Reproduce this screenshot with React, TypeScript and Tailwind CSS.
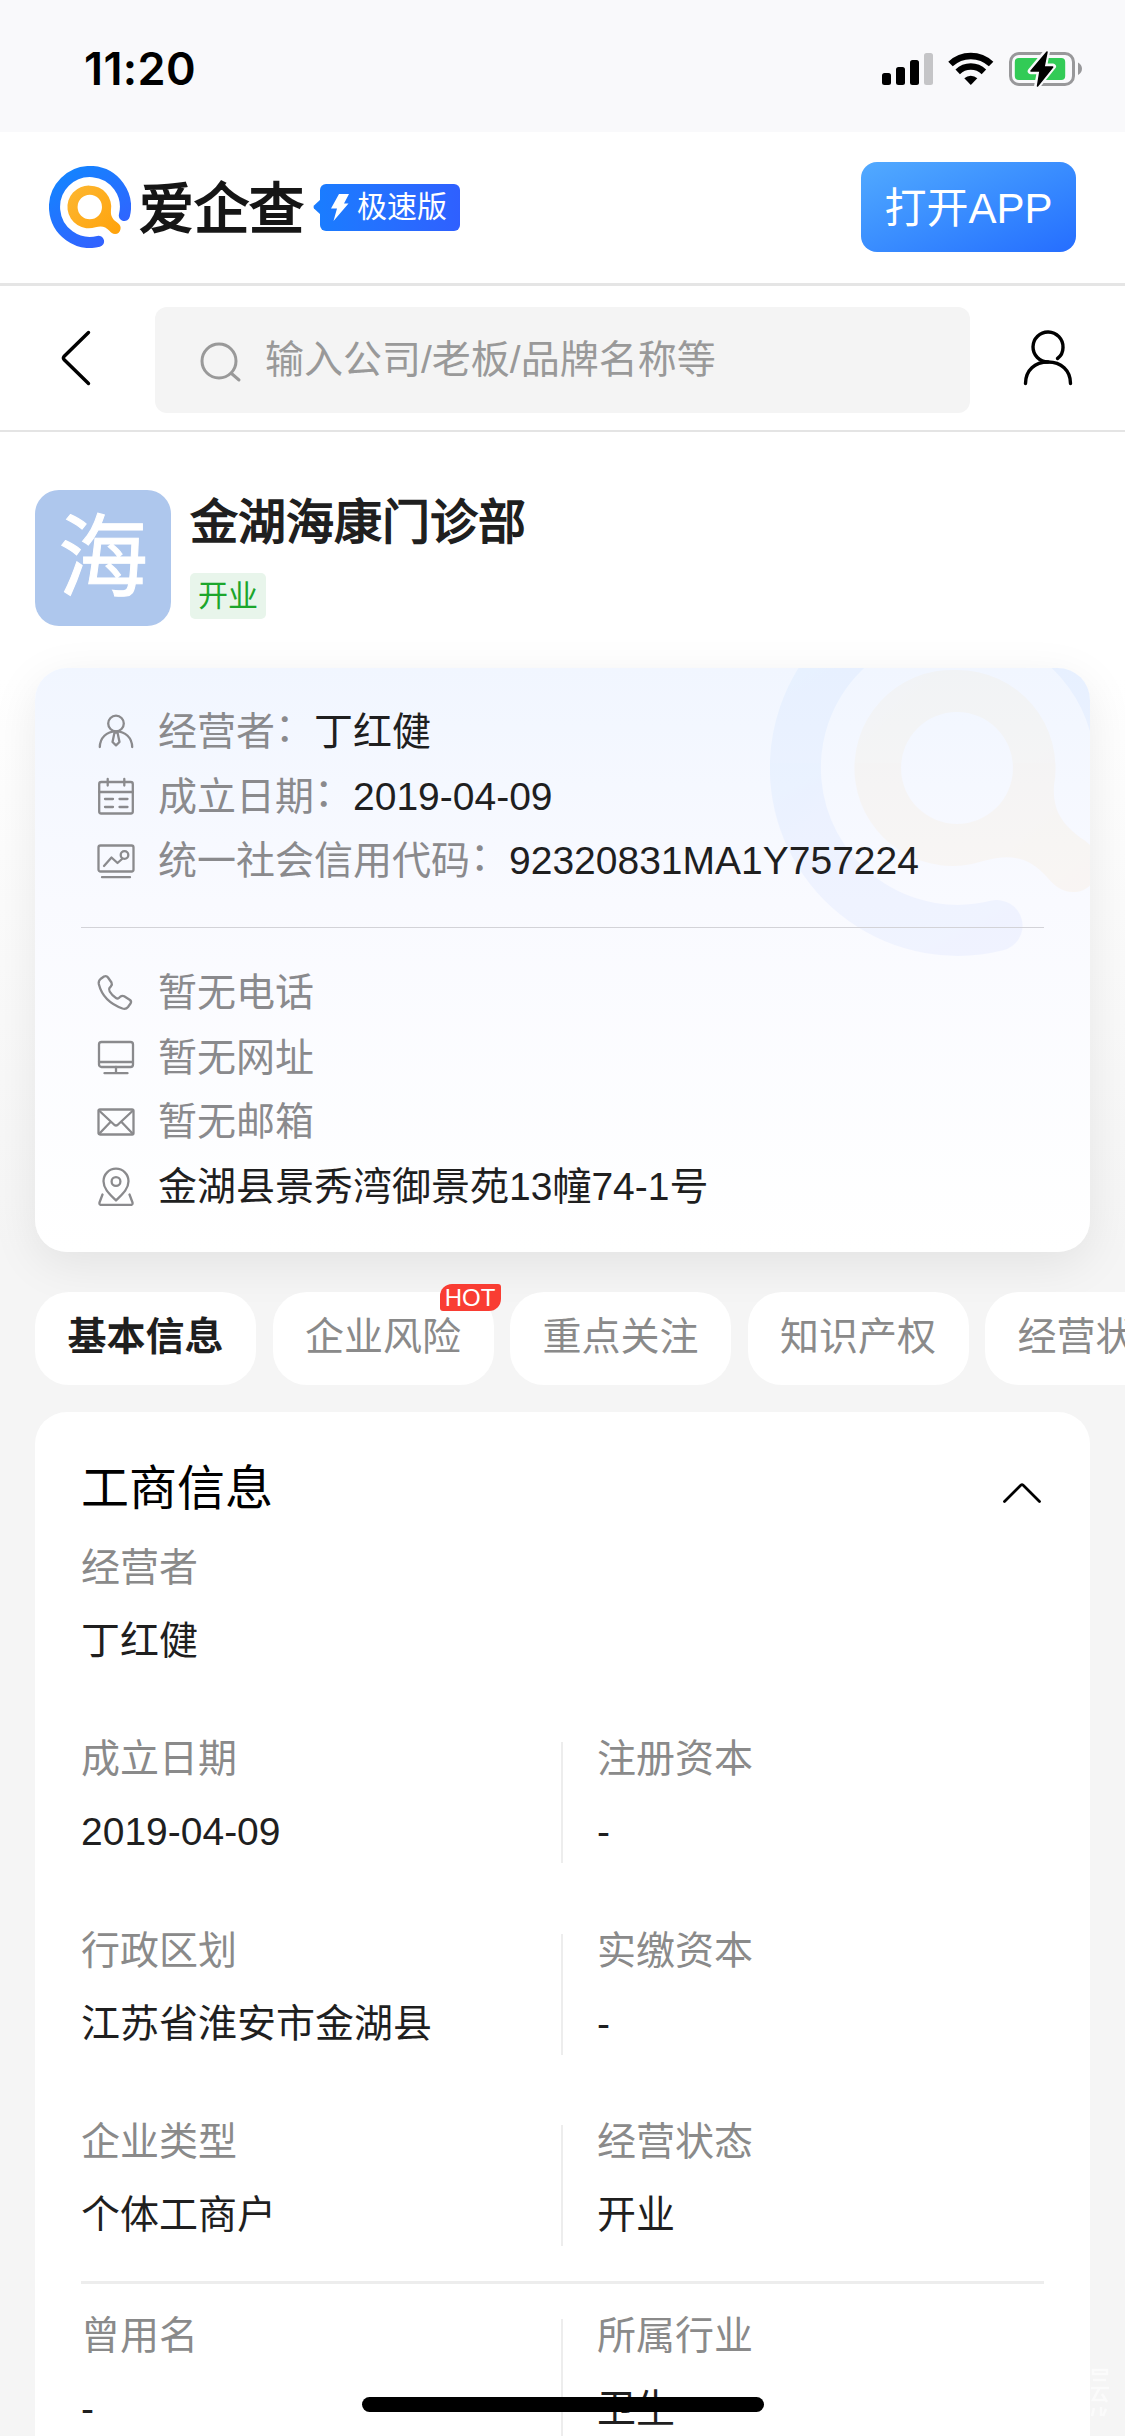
import React from "react";

interface Field {
  label: string;
  value: string;
}

const rows: Field[][] = [
  [
    { label: "成立日期", value: "2019-04-09" },
    { label: "注册资本", value: "-" },
  ],
  [
    { label: "行政区划", value: "江苏省淮安市金湖县" },
    { label: "实缴资本", value: "-" },
  ],
  [
    { label: "企业类型", value: "个体工商户" },
    { label: "经营状态", value: "开业" },
  ],
];

const lastRow: Field[] = [
  { label: "曾用名", value: "-" },
  { label: "所属行业", value: "卫生" },
];

const tabs = ["基本信息", "企业风险", "重点关注", "知识产权", "经营状"];

interface LogoProps {
  id: string;
  className?: string;
}

const LogoMark = (props: LogoProps) => {
  return (
    <svg viewBox="0 0 376 376" className={props.className} fill="none">
      <defs>
        <linearGradient id={props.id + "b"} gradientUnits="userSpaceOnUse" x1="60" y1="40" x2="260" y2="360">
          <stop offset="0" stopColor="#1483ff" />
          <stop offset="1" stopColor="#3361ff" />
        </linearGradient>
        <linearGradient id={props.id + "o"} gradientUnits="userSpaceOnUse" x1="100" y1="100" x2="320" y2="320">
          <stop offset="0" stopColor="#fdb62f" />
          <stop offset="1" stopColor="#ffa20a" />
        </linearGradient>
      </defs>
      <path
        d="M227 345.6A162.5 162.5 0 1 1 345.6 227"
        stroke={`url(#${props.id}b)`}
        strokeWidth="51"
        strokeLinecap="round"
      />
      {/* ring and handle in one shape, the inner circle is cut out */}
      <path
        fillRule="evenodd"
        d="M187 90A98 98 0 0 1 284 205C282 232 294 246 314 260C326 269 330 277 328 289C326 303 316 312 303 312C291 312 284 305 277 297C259 277 240 273 213 281A98 98 0 1 1 187 90ZM187 132A56 56 0 1 0 187 244A56 56 0 1 0 187 132Z"
        fill={`url(#${props.id}o)`}
      />
    </svg>
  );
};

const iconProps = {
  viewBox: "0 0 40 40",
  className: "h-10 w-10 shrink-0",
  fill: "none",
  stroke: "#8a8a8d",
  strokeWidth: 2.3,
  strokeLinecap: "round" as const,
  strokeLinejoin: "round" as const,
};

const PersonIcon = () => (
  <svg {...iconProps}>
    <circle cx="20" cy="12.500" r="7.800" />
    <path d="M3.800 36C4 27 10.500 20.300 20 20.300S36 27 36.200 36" />
    <path d="M18.500 21.500h3l2 9.500-3.500 3.300-3.500-3.300z" />
  </svg>
);

const CalendarIcon = () => (
  <svg {...iconProps}>
    <rect x="3.200" y="6" width="33.600" height="31.500" rx="2" />
    <path d="M3.200 16h33.600M11.700 3v6.500M28.300 3v6.500M9 23h8M23.500 23h8M9 31h8M23.500 31h8" />
  </svg>
);

const CodeIcon = () => (
  <svg {...iconProps}>
    <rect x="2.500" y="5.500" width="35" height="26" rx="2" />
    <path d="M6 37.200h28M8 26l7.500-8.500 6 5.500 4.500-4" />
    <circle cx="28.500" cy="15" r="3.800" />
  </svg>
);

const PhoneIcon = () => (
  <svg {...iconProps}>
    <path d="M4.500 7L8 4.500Q10.500 3.300 12 5.500L15.500 10.500Q16.500 12.500 14.800 14.500L13.500 16Q12.500 17.500 13.700 19.500Q16 23.500 20 26Q21.500 27 23 25.800L24.500 24.500Q26.300 23.300 28.200 24.300L34 28Q35.800 29.500 34.500 31.500L32 35Q30 37.500 26.500 36.500C14 32 5.500 23 2.800 12Q2.300 9 4.500 7Z" />
  </svg>
);

const MonitorIcon = () => (
  <svg {...iconProps}>
    <rect x="3" y="5" width="34" height="25" rx="2.500" />
    <path d="M3 25h34M20 30v6.200M8.500 36.200h23" />
  </svg>
);

const MailIcon = () => (
  <svg {...iconProps}>
    <rect x="2.500" y="8.500" width="35" height="25" rx="1.500" />
    <path d="M3 9.500L18.500 24Q20 25 21.500 24L37 9.500M3 33L14 21.500M37 33L26 21.500" />
  </svg>
);

const PinIcon = () => (
  <svg {...iconProps}>
    <path d="M20 34.500C14 28.500 7.500 23 7.500 15.200A12.500 12.500 0 0 1 32.500 15.200C32.500 23 26 28.500 20 34.500Z" />
    <circle cx="20" cy="15.500" r="4.400" />
    <path d="M6.500 28.500L3.500 36.500Q3 39 5.500 39H34.500Q37 39 36.500 36.500L33.500 28.500" />
  </svg>
);

interface InfoRowProps {
  icon: React.ReactNode;
  label?: string;
  value?: string;
}

const InfoRow = (props: InfoRowProps) => {
  return (
    <div className="flex h-[64.5px] items-center">
      {props.icon}
      <span className="mt-[2px] ml-[22px] text-[39px] leading-[60px] whitespace-nowrap text-[#8a8a8d]">
        {props.label}
        {props.label && props.value && <span className="relative -top-1">：</span>}
        <span className="text-[#1f1f1f]">{props.value}</span>
      </span>
    </div>
  );
};

const FieldRow = (props: { data: Field[] }) => {
  return (
    <div className="flex h-[121px]">
      {props.data.map((field, index) => {
        return (
          <div
            key={field.label}
            className={
              index === 0
                ? "w-[482px] shrink-0 border-r-2 border-[#ededed]"
                : "pl-[34px]"
            }
          >
            <div className="mt-px text-[39px] leading-[32px] text-[#8a8a8a]">{field.label}</div>
            <div className="mt-[37px] text-[39px] leading-[40px] text-[#1f1f1f]">{field.value}</div>
          </div>
        );
      })}
    </div>
  );
};

const StatusBar = () => {
  return (
    <div className="flex h-[132px] items-start justify-between bg-[#f9f9fb] pr-[42px] pl-[84px]">
      <span className="mt-[41px] font-[Inter] text-[45px] leading-[56px] font-semibold tracking-[0.4px] text-black">
        11:20
      </span>
      <svg className="mt-[48px] h-[42px] w-[204px]" viewBox="0 0 204 42">
        <rect x="3" y="25" width="9" height="12" rx="2.500" />
        <rect x="17" y="19" width="9" height="18" rx="2.500" />
        <rect x="31" y="12" width="9" height="25" rx="2.500" />
        <rect x="45" y="5" width="9" height="32" rx="2.500" fill="#c5c5c7" />
        <g fill="none" stroke="#000" strokeWidth="6.500">
          <path d="M71.500 16A29.500 29.500 0 0 1 112.100 16" />
          <path d="M78.700 23.800A19 19 0 0 1 104.900 23.800" />
        </g>
        <path d="M85.300 30.300A9.500 9.500 0 0 1 98.300 30.300L91.800 37Z" />
        <rect x="131.500" y="5.500" width="63" height="31" rx="8.500" fill="none" stroke="#98989a" strokeWidth="3" />
        <path d="M199 14.500Q203 17 203 20.700T199 27Z" fill="#98989a" />
        <rect x="135.800" y="10" width="50.400" height="22" rx="4" fill="#32cb56" />
        <path
          d="M168 3.500L151.700 23.200H161L158 38.500L174 18.500H165Z"
          stroke="#f9f9fb"
          strokeWidth="6"
          strokeLinejoin="round"
        />
        <path d="M168 4L152 23H161L158.500 38L173.700 19H165Z" stroke="#000" strokeWidth="1.500" strokeLinejoin="round" />
      </svg>
    </div>
  );
};

const Header = () => {
  return (
    <header className="flex h-[154px] items-center border-b-3 border-[#e5e5e5] bg-white pr-[49px] pb-px pl-[49px]">
      <LogoMark id="logo" className="h-[82px] w-[82px]" />
      <span className="mt-[3px] ml-[8px] text-[55px] leading-[60px] text-[#161616] [-webkit-text-stroke:2px_#161616]">
        爱企查
      </span>
      <svg className="ml-[9px] h-[16px] w-[8px]" viewBox="0 0 8 16">
        <path d="M8 0L1 6.500Q0 8 1 9.500L8 16Z" fill="#1a7cff" />
      </svg>
      <div className="-ml-px flex h-[47px] w-[140px] items-center rounded-[6px] bg-linear-to-r from-[#1a7cff] to-[#2f60ff] pl-[11px]">
        <svg className="h-[28px] w-[18px]" viewBox="0 0 18 28" fill="#fff">
          <path d="M8 1H18L13 10.500H17.500L2.500 28L6 15.500H0Z" />
        </svg>
        <span className="ml-[8px] text-[30px] leading-[40px] whitespace-nowrap text-white">极速版</span>
      </div>
      <button className="ml-auto h-[90px] w-[215px] rounded-[16px] bg-linear-to-br from-[#52aaff] to-[#266dff] text-[42px] leading-[93px] whitespace-nowrap text-white">
        打开APP
      </button>
    </header>
  );
};

const SearchBar = () => {
  return (
    <div className="flex h-[146px] items-center border-b-2 border-[#e4e4e4] bg-white pl-[60px]">
      <svg className="h-[56px] w-[32px]" viewBox="0 0 32 56" fill="none" stroke="#000" strokeWidth="3.400">
        <path d="M28.500 2.500L4 26.500Q2.800 28 4 29.500L28.500 53.500" strokeLinecap="round" />
      </svg>
      <div className="mt-[4px] ml-[63px] flex h-[106px] w-[815px] items-center rounded-[12px] bg-[#f4f4f4] pl-[45px]">
        <svg className="mt-[3px] h-[42px] w-[42px]" viewBox="0 0 42 42" fill="none" stroke="#999" strokeWidth="3">
          <circle cx="19" cy="20" r="17" />
          <path d="M31.500 32.500L39 39" strokeLinecap="round" />
        </svg>
        <span className="ml-[23px] text-[39px] leading-[60px] text-[#999]">
          输入公司/老板/品牌名称等
        </span>
      </div>
      <svg className="ml-[53px] h-[56px] w-[50px]" viewBox="0 0 50 56" fill="none" stroke="#000" strokeWidth="3.400" strokeLinecap="round">
        <path d="M34.500 28.500C38 26 40 21.500 40 17.500A15 15 0 1 0 25 32" />
        <path d="M2.500 53.500C2.500 40 12 32 25 32S47.500 40 47.500 53.500" />
      </svg>
    </div>
  );
};

const App = () => {
  return (
    <div className="relative h-[2436px] w-[1125px] overflow-hidden bg-[#f5f5f5] font-['Liberation_Sans','Noto_Sans_CJK_SC',sans-serif]">
      <StatusBar />
      <Header />
      <SearchBar />

      {/* company */}
      <div className="bg-linear-to-b from-white from-30% to-[#f5f5f5] to-100% px-[35px] pt-[58px]">
        <div className="flex h-[136px]">
          <div className="h-[136px] w-[136px] rounded-[24px] bg-[#aec7ed] text-center text-[90px] leading-[136px] text-white [-webkit-text-stroke:1px_white]">
            海
          </div>
          <div className="ml-[19px]">
            <h1 className="mt-[3px] text-[48px] leading-[60px] text-[#1f1f1f] [-webkit-text-stroke:1.6px_#1f1f1f]">
              金湖海康门诊部
            </h1>
            <span className="mt-[20px] block h-[46px] w-[76px] rounded-[5px] bg-[#e8f5eb] text-center text-[30px] leading-[45px] text-[#1ca62c]">
              开业
            </span>
          </div>
        </div>

        {/* info card */}
        <section className="relative mt-[42px] h-[584px] overflow-clip rounded-[32px] bg-linear-to-b from-[#f1f6ff] via-[#f9faff] via-40% to-white px-[46px] pt-[31px] shadow-[0_12px_48px_rgba(0,0,0,0.08)]">
          <LogoMark id="mark" className="absolute top-[-88px] left-[735px] h-[376px] w-[376px] opacity-[0.045]" />
          <div className="relative h-[229px] border-b border-[#d3d3d8] pl-[15px]">
            <InfoRow icon={<PersonIcon />} label="经营者" value="丁红健" />
            <InfoRow icon={<CalendarIcon />} label="成立日期" value="2019-04-09" />
            <InfoRow icon={<CodeIcon />} label="统一社会信用代码" value="92320831MA1Y757224" />
          </div>
          <div className="relative pt-[32px] pl-[15px]">
            <InfoRow icon={<PhoneIcon />} label="暂无电话" />
            <InfoRow icon={<MonitorIcon />} label="暂无网址" />
            <InfoRow icon={<MailIcon />} label="暂无邮箱" />
            <InfoRow icon={<PinIcon />} value="金湖县景秀湾御景苑13幢74-1号" />
          </div>
        </section>
      </div>

      {/* tabs */}
      <nav className="relative mt-[40px] ml-[35px] flex w-[1090px] gap-[16.5px]">
        {tabs.map((tab, index) => {
          return (
            <div
              key={tab}
              className={
                index === 0
                  ? "relative h-[93px] w-[221px] shrink-0 rounded-[34px] bg-white pl-[32.5px] text-[39px] leading-[89px] font-bold text-[#1f1f1f]"
                  : "relative h-[93px] w-[221px] shrink-0 rounded-[34px] bg-white pl-[32.5px] text-[39px] leading-[89px] text-[#8a8a8a]"
              }
            >
              {tab}
              {index === 1 && (
                <span className="absolute top-[-8px] right-[-7px] h-[27px] w-[61px] rounded-tl-[12px] rounded-tr-[3px] rounded-br-[12px] rounded-bl-[3px] bg-[#f93d33] text-center text-[24px] leading-[28px] text-white">
                  HOT
                </span>
              )}
            </div>
          );
        })}
      </nav>

      {/* registration */}
      <section className="mx-[35px] mt-[27px] rounded-t-[32px] bg-white px-[46px] pt-[47px] pb-10">
        <div className="flex h-[60px] items-center justify-between">
          <h2 className="text-[48px] leading-[60px] text-black">工商信息</h2>
          <svg className="mt-[8px] mr-[2px] h-[24px] w-[40px]" viewBox="0 0 40 24" fill="none" stroke="#000" strokeWidth="2.800">
            <path d="M2.500 20.500L19 4Q20 3.200 21 4L37.500 20.500" strokeLinecap="round" />
          </svg>
        </div>
        <div className="mt-[33px] h-[120px]">
          <div className="text-[39px] leading-[32px] text-[#8a8a8a]">经营者</div>
          <div className="mt-[41px] text-[39px] leading-[32px] text-[#1f1f1f]">丁红健</div>
        </div>
        <div className="mt-[70px] flex flex-col gap-[70.5px]">
          {rows.map((row) => {
            return <FieldRow key={row[0].label} data={row} />;
          })}
        </div>
        <div className="mt-[35px] h-[3px] bg-[#ededed]" />
        <div className="mt-[35px]">
          <FieldRow data={lastRow} />
        </div>
      </section>

      {/* faint stamp at the right edge */}
      <svg className="absolute top-[2366px] left-[1090px] h-[56px] w-[20px]" viewBox="0 0 20 56" fill="none" stroke="#fbfbfb" strokeWidth="2.500">
        <path d="M3 4H17V8H3ZM3 14H16M1 22H19M9 23L3 34H16M12 28L17 36M4 42L2 50M11 41V50M16 43L13 50" />
      </svg>

      {/* home indicator */}
      <div className="absolute top-[2397px] left-[362px] h-[15px] w-[402px] rounded-full bg-black" />
    </div>
  );
};

export default App;
